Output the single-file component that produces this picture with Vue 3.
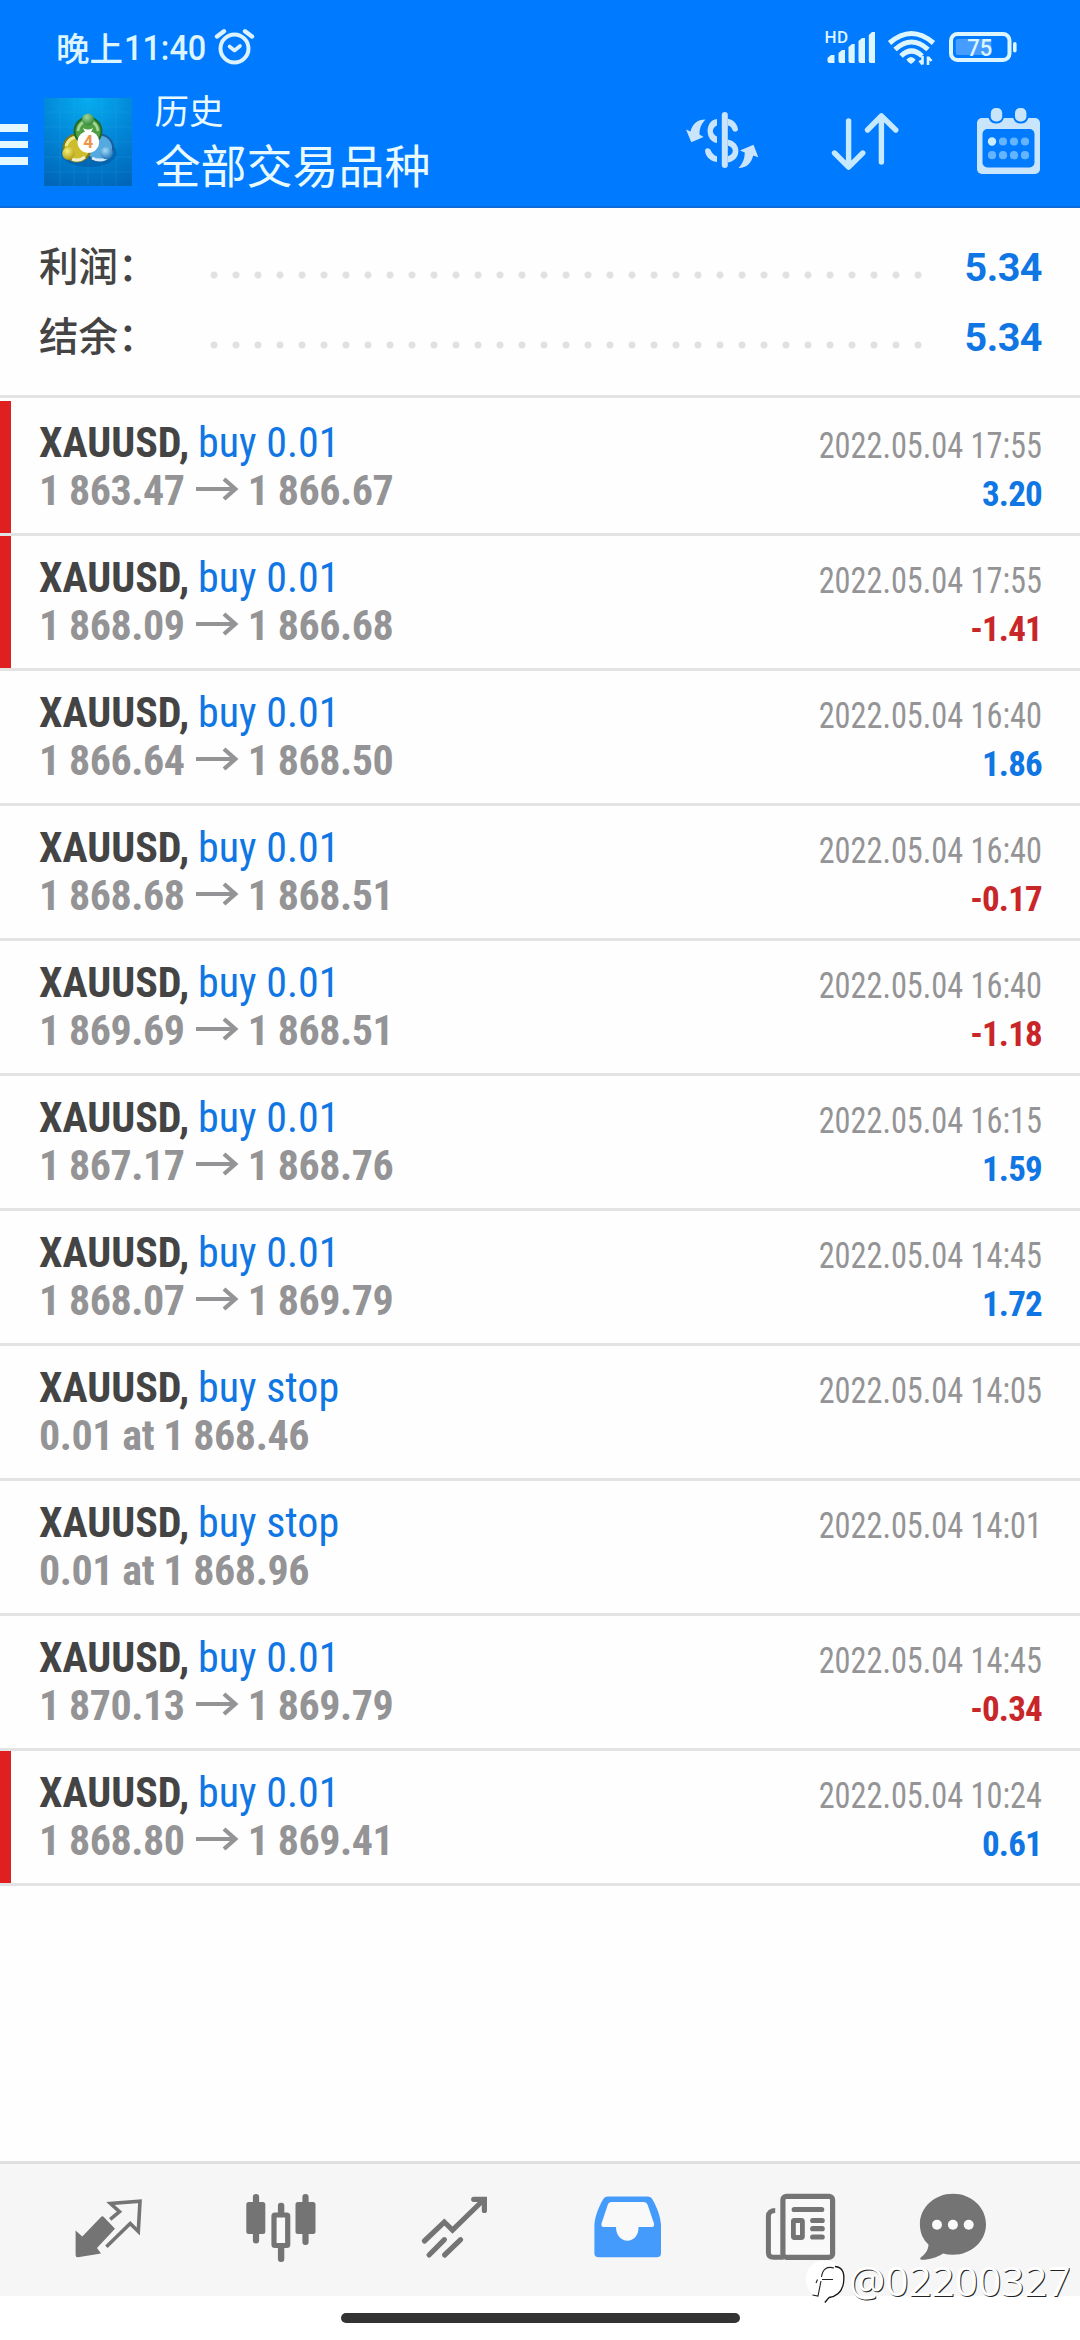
<script setup>
const deals = [
  { kind: 'buy 0.01', from: '1 863.47', to: '1 866.67', time: '2022.05.04 17:55', profit: '3.20', flagged: true },
  { kind: 'buy 0.01', from: '1 868.09', to: '1 866.68', time: '2022.05.04 17:55', profit: '-1.41', flagged: true },
  { kind: 'buy 0.01', from: '1 866.64', to: '1 868.50', time: '2022.05.04 16:40', profit: '1.86' },
  { kind: 'buy 0.01', from: '1 868.68', to: '1 868.51', time: '2022.05.04 16:40', profit: '-0.17' },
  { kind: 'buy 0.01', from: '1 869.69', to: '1 868.51', time: '2022.05.04 16:40', profit: '-1.18' },
  { kind: 'buy 0.01', from: '1 867.17', to: '1 868.76', time: '2022.05.04 16:15', profit: '1.59' },
  { kind: 'buy 0.01', from: '1 868.07', to: '1 869.79', time: '2022.05.04 14:45', profit: '1.72' },
  { kind: 'buy stop', note: '0.01 at 1 868.46', time: '2022.05.04 14:05' },
  { kind: 'buy stop', note: '0.01 at 1 868.96', time: '2022.05.04 14:01' },
  { kind: 'buy 0.01', from: '1 870.13', to: '1 869.79', time: '2022.05.04 14:45', profit: '-0.34' },
  { kind: 'buy 0.01', from: '1 868.80', to: '1 869.41', time: '2022.05.04 10:24', profit: '0.61', flagged: true },
]
const totals = [
  { label: '利润：', value: '5.34' },
  { label: '结余：', value: '5.34' },
]
</script>

<template>
  <div class="screen">
    <header class="top">
      <div class="status">
        <span class="clock">晚上<span class="digits">11:40</span></span>
        <svg class="alarm" width="42" height="40" viewBox="213 28 42 40" fill="none" stroke="#dcf3ff" stroke-linecap="round">
          <circle cx="234.5" cy="48.5" r="14" stroke-width="4" />
          <path d="M217 36.5 224 31.3M252 36.5 245 31.3" stroke-width="4.4" />
          <path d="M229.5 46.5 234.5 50.5 240 46" stroke-width="3.6" stroke-linejoin="round" />
        </svg>
        <svg class="signals" width="196" height="40" viewBox="824 28 196 40" fill="#dcf5ff">
          <text x="824.6" y="43.4" font-size="17" font-weight="500" font-family="Roboto, sans-serif" textLength="23.5">HD</text>
          <path d="M827.5 61V58L831 55H834.5V63H829.5Q827.5 63 827.5 61Z" />
          <path d="M838.5 61V53L842 50H845V63H840.5Q838.5 63 838.5 61Z" />
          <path d="M848.5 61V47L852 44H854.7V63H850.5Q848.5 63 848.5 61Z" />
          <path d="M858.5 61V41L862 38H865V63H860.5Q858.5 63 858.5 61Z" />
          <path d="M868.8 61V35L872 32H875V63H870.8Q868.8 63 868.8 61Z" />
          <g fill="none" stroke="#dcf5ff" stroke-width="5">
            <path d="M889.5 43Q911.5 24 933.5 43" />
            <path d="M895 49.5Q911.5 34.5 928 49.5" />
            <path d="M901 56Q911.5 46 922 56" />
          </g>
          <path d="M906.4 59.5Q911 54.5 915.6 59.5 914 62.5 911 64 908 62.5 906.4 59.5Z" />
          <path d="M922.5 56V64.5M922.5 64.5 919.5 60.5M928 65V56.5M928 57 931.5 61" fill="none" stroke="#dcf5ff" stroke-width="2.6" />
          <rect x="951" y="34" width="58.5" height="26" rx="6.5" fill="none" stroke="#dcf5ff" stroke-width="4" />
          <rect x="955.8" y="39" width="35.5" height="16" rx="2" fill="#479dff" />
          <rect x="1013" y="42" width="3.6" height="10.5" rx="1.8" />
          <text x="967.3" y="56" font-size="23.5" font-weight="500" font-family="Roboto, sans-serif" textLength="25" lengthAdjust="spacingAndGlyphs">75</text>
        </svg>
      </div>
      <div class="toolbar">
        <div class="menu"><i></i><i></i><i></i></div>
        <svg class="logo" width="88" height="88" viewBox="44 98 88 88">
          <defs>
            <radialGradient id="sky" cx=".5" cy="0" r="1.05">
              <stop offset="0" stop-color="#06aef0" />
              <stop offset=".5" stop-color="#0287d8" />
              <stop offset="1" stop-color="#0067b8" />
            </radialGradient>
            <radialGradient id="leaf" cx=".4" cy=".3" r=".8">
              <stop offset="0" stop-color="#a4d79a" /><stop offset="1" stop-color="#1f7d2b" />
            </radialGradient>
            <radialGradient id="gold" cx=".4" cy=".3" r=".8">
              <stop offset="0" stop-color="#f6ee7a" /><stop offset="1" stop-color="#a89708" />
            </radialGradient>
            <radialGradient id="aqua" cx=".4" cy=".3" r=".8">
              <stop offset="0" stop-color="#a3dcfa" /><stop offset="1" stop-color="#1268b0" />
            </radialGradient>
          </defs>
          <rect x="44" y="98" width="88" height="88" fill="url(#sky)" />
          <path d="M60 98V186M74 98V186M88 98V186M102 98V186M116 98V186M44 112H132M44 127H132M44 142H132M44 157H132M44 172H132" stroke="#3ab4ee" stroke-width=".7" opacity=".25" />
          <ellipse cx="89" cy="153" rx="28" ry="14" fill="#00458c" opacity=".35" />
          <circle cx="99.5" cy="148" r="13.5" fill="#54a9df" stroke="#1a5f9c" stroke-width="2" />
          <path d="M92 158Q102 163 109 156" fill="none" stroke="#d4ecfa" stroke-width="3" />
          <circle cx="77" cy="148" r="13.5" fill="#cdbd2c" stroke="#7f7a16" stroke-width="2" />
          <path d="M66 146Q69 137 78 137" fill="none" stroke="#f2ea90" stroke-width="3" />
          <path d="M72 159Q79 162 85 157" fill="none" stroke="#f2eecb" stroke-width="3" />
          <circle cx="88" cy="131" r="13.5" fill="#4f9f43" stroke="#1f6a2b" stroke-width="2" />
          <path d="M78 131Q79 123 86 121M98 131Q97 123 90 121" fill="none" stroke="#a7d59b" stroke-width="2.5" />
          <path d="M83 128Q88 131 93 128L91 132H85Z" fill="#fff" />
          <circle cx="88" cy="119.5" r="6" fill="url(#leaf)" />
          <circle cx="68.5" cy="153.5" r="6.3" fill="url(#gold)" />
          <circle cx="106.5" cy="153" r="6.3" fill="url(#aqua)" />
          <circle cx="88.3" cy="142" r="10.8" fill="#fff" />
          <text x="88.3" y="148.2" font-size="17.5" font-weight="700" font-family="Roboto, sans-serif" fill="#ee9348" text-anchor="middle">4</text>
        </svg>
        <div class="titles">
          <div class="small">历史</div>
          <div class="big">全部交易品种</div>
        </div>
        <svg class="tool dollar" width="80" height="72" viewBox="682 104 80 72" fill="#c9e4fb">
          <rect x="721.8" y="112" width="6" height="56" rx="3" />
          <path d="M717 119C704.5 120 704.5 141.5 717 143V136.5C711.5 134 711.5 128 717 125.5Z" />
          <path d="M717 162C709 161 704.5 155 705.2 149.5 707 147.5 709.5 148 710.8 150.5 711.8 153 714 155.5 717 156.3Z" />
          <path d="M727.8 118.7C733.5 119.5 737.5 124 738 129.5 737 132.5 733.3 132.5 732.3 129.5 731.5 127 730 126 727.8 125.5Z" />
          <path d="M727.8 139.5C742 142 742 160.5 727.8 162.5V156.3C734.5 154 734.5 147.5 727.8 145.5Z" />
          <path d="M705.5 119.5C697 119.5 692.5 124 690.5 131.5L686 129.5 691.3 142.2 703.6 137 699.5 134.5C699.5 128.5 701 124 705.5 119.5Z" />
          <path d="M738.5 168C747 168 751.5 162.5 753.2 155.5L758.3 157.3 753.5 144.8 740 150.5 744.8 152.5C744.5 159 743 163 738.5 168Z" />
        </svg>
        <svg class="tool sort" width="80" height="72" viewBox="826 106 80 72" fill="none" stroke="#c6e9fd" stroke-width="5.4" stroke-linecap="round" stroke-linejoin="round">
          <path d="M848.6 121V166.5M834.5 153 848.6 167.2 862.8 153" />
          <path d="M881.4 162V116M867.5 130 881.4 115.8 895.8 130" />
        </svg>
        <svg class="tool" width="66" height="72" viewBox="976 105 66 72">
          <rect x="977" y="118" width="63" height="56" rx="5" fill="#c9e5fb" />
          <rect x="982.5" y="129" width="52" height="38.5" rx="5" fill="#007aff" />
          <rect x="988.5" y="104" width="15.5" height="19.5" rx="7" fill="#007aff" />
          <rect x="1013" y="104" width="15.5" height="19.5" rx="7" fill="#007aff" />
          <rect x="990.8" y="108" width="11.4" height="13.5" rx="5" fill="#c9e5fb" />
          <rect x="1015" y="108" width="11.4" height="13.5" rx="5" fill="#c9e5fb" />
          <g fill="#64b5fd">
            <circle cx="992" cy="141.5" r="4.2" fill="#c9edff" />
            <circle cx="1003" cy="141.5" r="4.1" /><circle cx="1014" cy="141.5" r="4.1" /><circle cx="1025" cy="141.5" r="4.1" />
            <circle cx="992" cy="155.2" r="4.1" /><circle cx="1003" cy="155.2" r="4.1" /><circle cx="1014" cy="155.2" r="4.1" /><circle cx="1025" cy="155.2" r="4.1" />
          </g>
        </svg>
      </div>
    </header>

    <section class="totals">
      <div v-for="t in totals" :key="t.label" class="total">
        <span class="label">{{ t.label }}</span>
        <span class="leader"></span>
        <span class="sum">{{ t.value }}</span>
      </div>
    </section>

    <main class="list">
      <article v-for="(d, i) in deals" :key="i" class="deal" :class="{ flagged: d.flagged }">
        <div class="left">
          <div class="line one"><b>XAUUSD,</b> <span>{{ d.kind }}</span></div>
          <div class="line two">
            <template v-if="d.note">{{ d.note }}</template>
            <template v-else>
              <span>{{ d.from }}</span>
              <svg class="arrow" width="43" height="26" viewBox="0 0 43 26" fill="none" stroke="#949496" stroke-width="4.2"><path d="M0 13H39M28 3 39.3 13 28 23" /></svg>
              <span>{{ d.to }}</span>
            </template>
          </div>
        </div>
        <div class="right">
          <div class="time">{{ d.time }}</div>
          <div v-if="d.profit" class="profit" :class="{ loss: d.profit.startsWith('-') }">{{ d.profit }}</div>
        </div>
      </article>
    </main>

    <nav class="tabs">
      <svg width="80" height="80" viewBox="68 2188 80 80" fill="#747474">
        <path d="M75.6 2230.5 82.3 2236.5 101 2217Q102.3 2215.6 103.8 2217L115 2228.7 97 2248 101 2253.5 78 2257.2Q75.6 2257.5 75.6 2255Z" />
        <path d="M110.2 2219.3 119.5 2211.7 110.5 2203.5 140 2201.3 138.3 2231.5 130.2 2223.5 106.4 2246.8" fill="none" stroke="#747474" stroke-width="3.6" />
      </svg>
      <svg width="80" height="80" viewBox="241.3 2188 80 80" fill="#747474">
        <rect x="246.6" y="2202" width="19" height="32" rx="2.5" /><rect x="253.2" y="2194" width="6.2" height="49.5" rx="3" />
        <rect x="295.8" y="2202" width="20" height="32" rx="2.5" /><rect x="302.7" y="2194" width="6.2" height="51" rx="3" />
        <rect x="278.2" y="2202.7" width="6.4" height="14" rx="3" /><rect x="278.2" y="2245" width="6.4" height="17" rx="3" />
        <rect x="274.3" y="2215" width="13.7" height="30.5" rx="1" fill="#f9f9f9" stroke="#747474" stroke-width="5.2" />
      </svg>
      <svg width="80" height="80" viewBox="414.6 2188 80 80" fill="none" stroke="#747474" stroke-width="5.2" stroke-linecap="round">
        <path d="M424 2241 443.9 2222 452.1 2230 482.5 2200.5" />
        <path d="M473.3 2199.3H484V2210.5" />
        <path d="M428.7 2255 444 2239.7M444.2 2255 460.2 2239.7" />
      </svg>
      <svg width="80" height="80" viewBox="588 2188 80 80">
        <path d="M608 2196.5H647.5Q651 2196.5 652.5 2199.5C658 2209 661 2219 661 2226V2253Q661 2257.3 656.7 2257.3H598.7Q594.4 2257.3 594.4 2253V2226C594.4 2219 597.5 2209 603 2199.5Q604.5 2196.5 608 2196.5Z" fill="#449bfb" />
        <path d="M611.5 2202H643.5Q646.5 2202 647.7 2205L654 2223.5Q654.8 2227 651.5 2227H638.5C639 2245.3 616 2245.3 616 2227H604Q600.8 2227 601.5 2223.5L607.7 2205Q608.5 2202 611.5 2202Z" fill="#f9f9f9" />
      </svg>
      <svg width="80" height="80" viewBox="761.3 2188 80 80" fill="none" stroke="#747474">
        <path d="M775.5 2210.5C771.5 2210.5 768.7 2212.5 768.7 2216V2252.5Q768.7 2257.3 774 2257.3H784" fill="#f9f9f9" stroke-width="5" />
        <rect x="783.2" y="2196.3" width="49.7" height="61" rx="3.5" fill="#f9f9f9" stroke-width="5.2" />
        <path d="M794.5 2209.5H822M813 2220.5H822.5M813 2228.7H822.5M813 2237H822.5" stroke-width="5.2" stroke-linecap="round" />
        <rect x="793.7" y="2220.5" width="9" height="17" rx="1" stroke-width="4.8" />
      </svg>
      <svg class="last" width="80" height="80" viewBox="913 2188 80 80">
        <path d="M953 2193.7C971.5 2193.7 986 2207.3 986 2224.2S971.5 2254.7 953 2254.7Q947.5 2254.7 943 2253.5C937 2257.5 929 2260 921.5 2259.8 919.8 2259.5 919.8 2258 921.3 2257 926 2253.5 928.3 2249.5 928.5 2244.5 923 2239.5 919.9 2232.5 919.9 2224.2 919.9 2207.3 934.5 2193.7 953 2193.7Z" fill="#747474" />
        <g fill="#fafafa"><circle cx="937" cy="2224.7" r="5" /><circle cx="952.9" cy="2224.7" r="5" /><circle cx="968.7" cy="2224.7" r="5" /></g>
      </svg>
    </nav>
    <footer class="gesture"><i></i></footer>

    <div class="watermark">
      <svg width="45" height="50" viewBox="804 2260 45 50" fill="none">
        <path d="M806 2281C806 2269 814 2262.5 825 2262.5S844.5 2270 844.5 2282 836 2297.5 829 2300L824.5 2305 825.5 2300C813 2299.5 806 2292 806 2281Z" fill="#fff" />
        <path d="M835 2268.5C844 2269 844.5 2277 843.5 2285 842 2294 836 2298.5 829 2299.5L824.8 2304.5" stroke="#111" stroke-width="1.3" />
        <path d="M834 2270C827 2268 822.5 2271 821.5 2279M817.5 2281.5 816 2285M822 2281.5H833M821 2283 818 2298 812.5 2297" stroke="#222" stroke-width="1.1" />
      </svg>
      <span>@02200327</span>
    </div>
  </div>
</template>

<style>
body { margin: 0; background: #fff; }
</style>

<style scoped>
.screen { position: relative; display: flex; flex-direction: column; width: 1080px; height: 2340px; overflow: hidden; background: #fefefe; font-family: Roboto, "Noto Sans CJK SC", sans-serif; }
svg { display: block; flex: none; }

.top { box-sizing: border-box; height: 208px; background: #007aff; border-bottom: 2px solid #0b6cd9; color: #e9faff; }
.status { display: flex; box-sizing: border-box; height: 68px; padding: 28px 0 0 56px; }
.clock { display: flex; width: 157px; height: 40px; font: 500 33.5px/37px "Noto Sans CJK SC", sans-serif; color: #dcf5ff; white-space: nowrap; }
.digits { font: 500 34.5px/41px Roboto, sans-serif; transform: scaleX(.94); transform-origin: 0 50%; margin-left: 1px; }
.signals { margin-left: 569px; }
.toolbar { display: flex; height: 138px; }
.menu { display: flex; flex-direction: column; gap: 9px; width: 27.5px; padding-top: 56px; margin-right: 16.5px; }
.menu i { height: 7.5px; background: #e4f8ff; }
.logo { margin-top: 30px; }
.titles { width: 550px; padding-left: 22.5px; font-family: "Noto Sans CJK SC", sans-serif; font-weight: 400; }
.small { margin-top: 21px; height: 40px; font-size: 34.5px; line-height: 40px; }
.big { margin-top: 7px; height: 54px; font-size: 46px; line-height: 54px; }
.dollar { margin: 36px 0 0; margin-left: -22.5px; }
.sort { margin: 38px 70px 0 64px; }
.tool:last-child { margin-top: 37px; }

.totals { box-sizing: border-box; height: 190px; padding-top: 23px; border-bottom: 3px solid #e3e3e3; }
.total { display: flex; height: 70px; padding: 0 38px 0 39px; }
.label { width: 163.5px; font: 500 39.5px/65px "Noto Sans CJK SC", sans-serif; color: #444; }
.leader { width: 726px; height: 70px; background: radial-gradient(circle, #e1e1e1 3px, transparent 4px) 0 0 / 22px 88px; }
.sum { margin-left: auto; font: 700 39.5px/74px Roboto, sans-serif; letter-spacing: -.5px; color: #0f76e4; }

.list { padding-top: 3px; flex: 1; }
.deal { display: flex; justify-content: space-between; box-sizing: border-box; height: 135px; padding: 0 38px 0 39px; border-bottom: 3px solid #e3e3e3; font-stretch: 75%; font-family: "Roboto Condensed", Roboto, sans-serif; }
.flagged { background: linear-gradient(#e01f21, #e01f21) 0 0 / 11px 100% no-repeat; }
.line { white-space: nowrap; font-size: 42px; height: 48px; line-height: 48px; }
.one { margin-top: 18px; color: #0f76e4; }
.one span { margin-left: -1px; }
.one b { color: #444; }
.two { display: flex; font-weight: 700; letter-spacing: -.45px; color: #949496; }
.arrow { margin: 9px 9px 0 11px; }
.right { text-align: right; }
.time { margin-top: 24px; height: 43px; line-height: 43px; font-size: 36px; color: #949496; transform: scaleX(.897); transform-origin: 100% 50%; }
.profit { height: 48px; line-height: 53px; font-size: 35px; font-weight: 700; letter-spacing: -.8px; color: #0f76e4; }
.loss { color: #c9262a; }

.tabs { display: flex; gap: 93.3px; box-sizing: border-box; height: 135px; padding: 24px 0 0 68px; background: #f6f6f6; border-top: 3px solid #e0e0e0; }
.last { margin-left: -21.5px; }
.gesture { display: flex; justify-content: center; height: 44px; background: #fff; }
.gesture i { width: 399px; height: 10px; margin-top: 17px; border-radius: 5px; background: #333; }

.watermark { position: absolute; left: 804px; top: 2258px; display: flex; color: #fff; font: 400 40.5px/46px "Open Sans", sans-serif; text-shadow: 1px 1px 0 #222; white-space: nowrap; }
</style>
